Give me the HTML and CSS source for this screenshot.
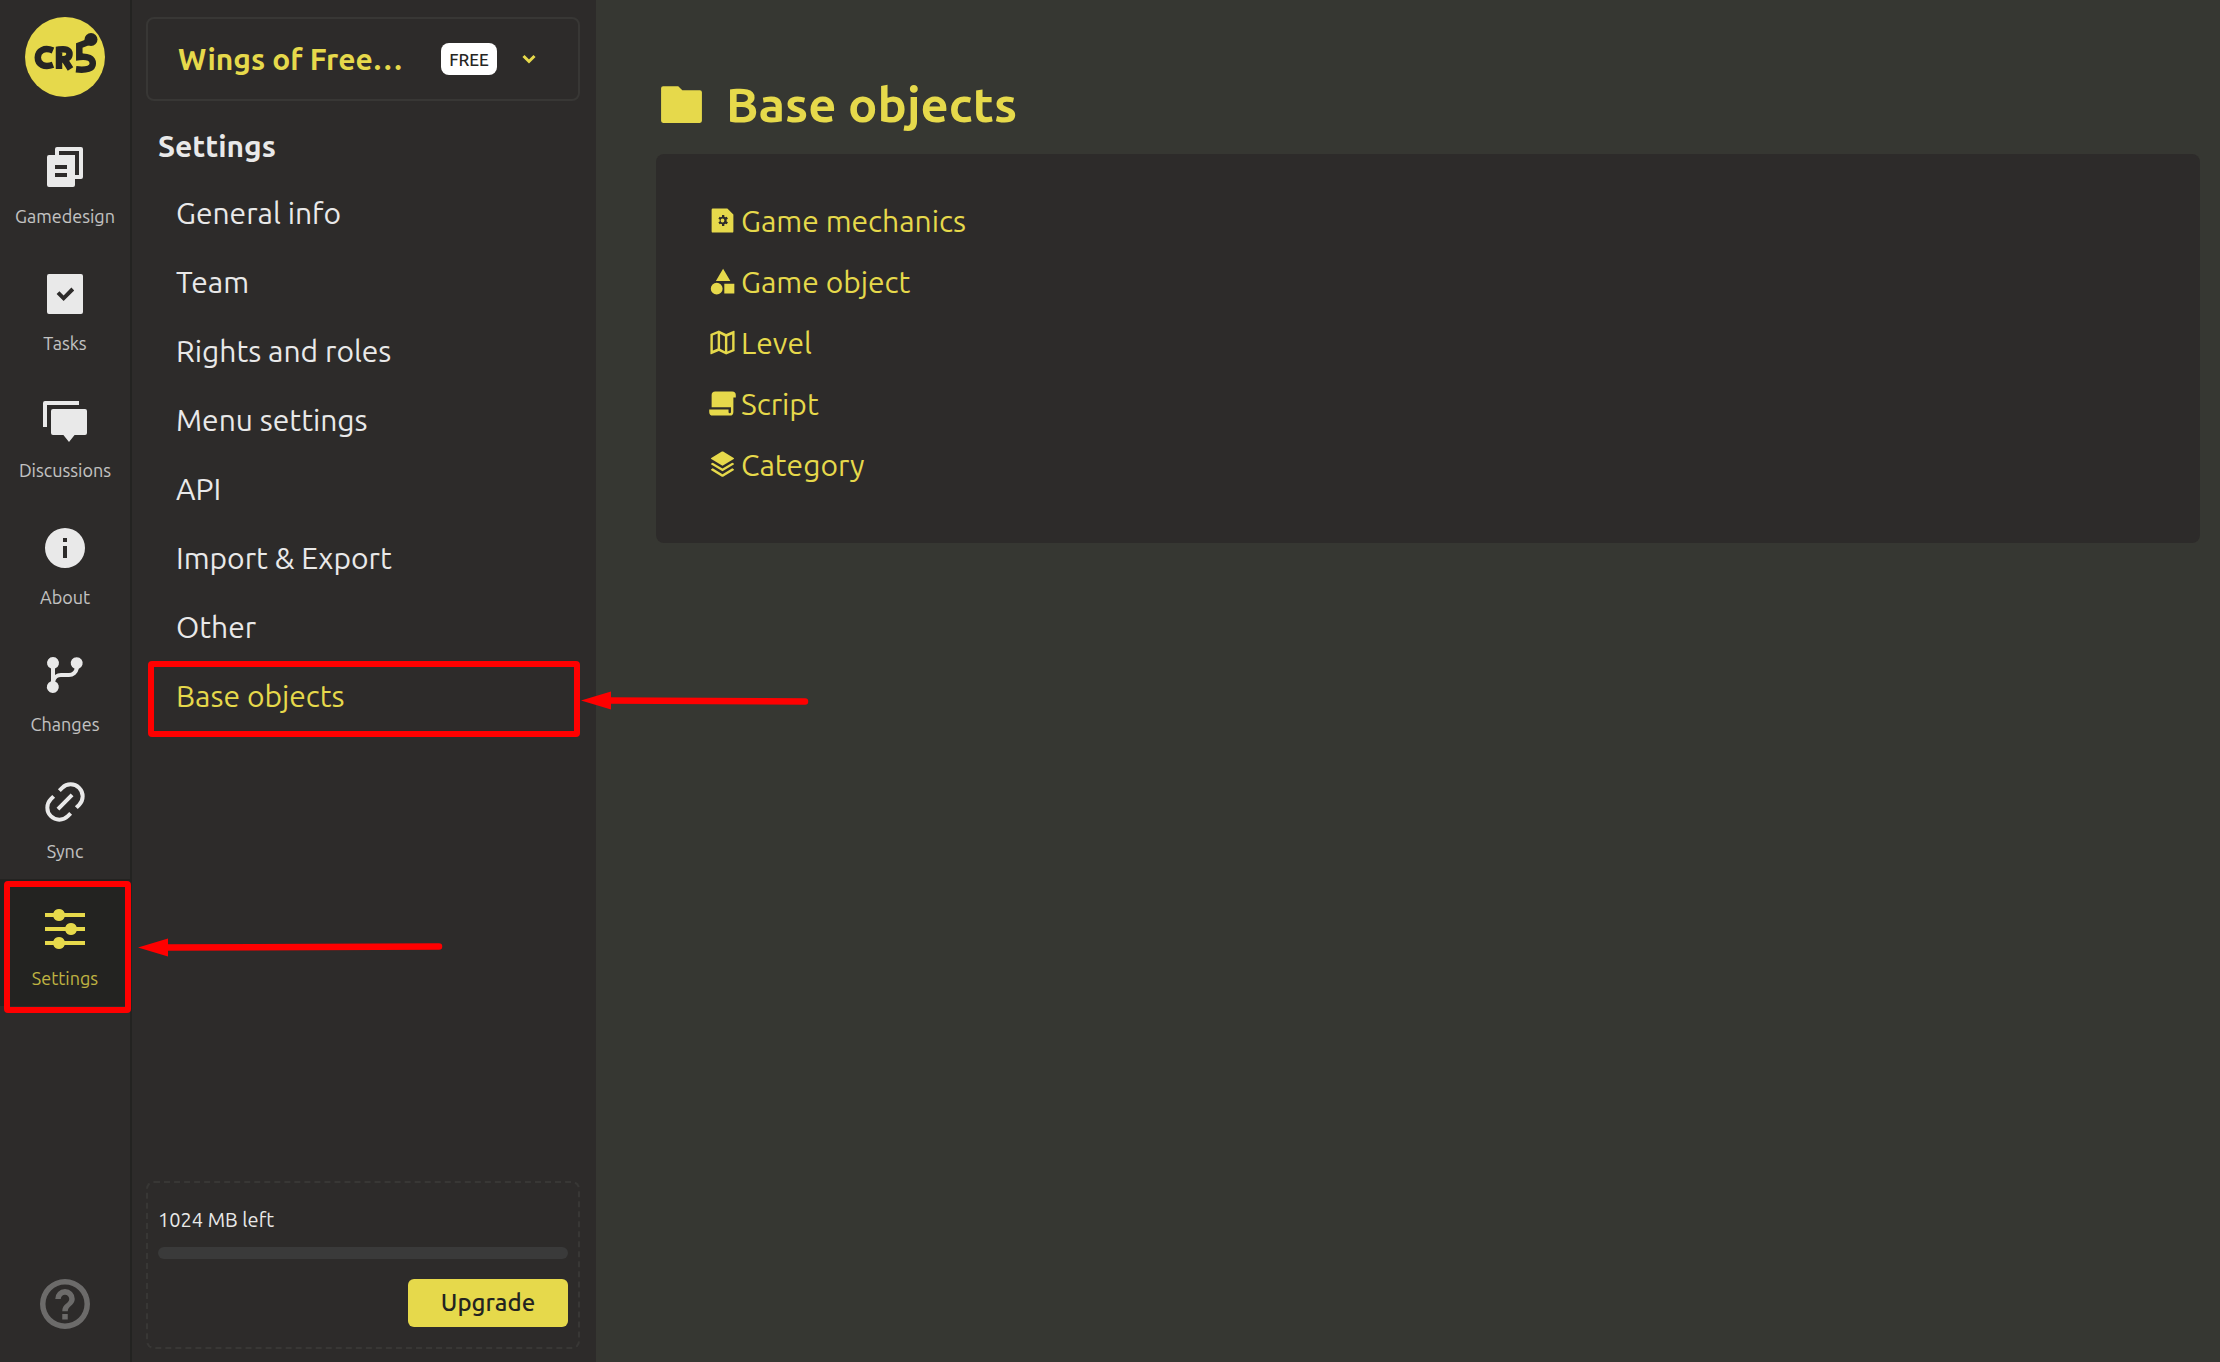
FILE: index.html
```html
<!DOCTYPE html>
<html lang="en">
<head>
<meta charset="utf-8">
<title>Base objects</title>
<link rel="stylesheet" href="styles.css">
</head>
<body>
<div class="app">
  <nav class="rail" aria-label="Sections">
    <a class="logo" href="#" aria-label="CR5 home">
      <svg viewBox="0 0 80 80"><circle cx="40" cy="40" r="40" fill="#e6d94b"/>
        <g fill="none" stroke="#252523" stroke-width="6.500">
          <path d="M28 33.500C19.500 30 12.800 33.500 12.800 40.500S19.500 51 28 47.800"/>
          <path d="M34 52V32.500c6.500-1 10.500 0 10.500 4.500s-4 5.500-9 5.500M39.500 42.500L45.500 52"/>
          <path d="M66 24L54.300 28.500V40C63 38.800 67.800 41.500 67.800 46.500S62 53.500 51 52.300"/>
        </g>
        <circle cx="66" cy="22.500" r="6.500" fill="#252523"/></svg>
    </a>
    <a class="rail-item" href="#"><svg class="rail-icon" viewBox="0 0 24 24"><path d="M7 6V3a1 1 0 0 1 1-1h12a1 1 0 0 1 1 1v14a1 1 0 0 1-1 1h-3v3a1 1 0 0 1-1 1H4a1 1 0 0 1-1-1V7a1 1 0 0 1 1-1zm2 0h8v10h2V4H9zm-2 5v2h6v-2zm0 4v2h6v-2z"/></svg><span>Gamedesign</span></a>
    <a class="rail-item" href="#"><svg class="rail-icon" viewBox="0 0 24 24"><path d="M20 22H4a1 1 0 0 1-1-1V3a1 1 0 0 1 1-1h16a1 1 0 0 1 1 1v18a1 1 0 0 1-1 1zm-8.700-6.500l5.300-5.300-1.400-1.400-3.900 3.900-2.100-2.100-1.400 1.400z"/></svg><span>Tasks</span></a>
    <a class="rail-item" href="#"><svg class="rail-icon" viewBox="0 0 24 24"><path d="M16.800 19L14 22.500 11.200 19H6a1 1 0 0 1-1-1V7a1 1 0 0 1 1-1h16a1 1 0 0 1 1 1v11a1 1 0 0 1-1 1zM2 2h17v2H3v11H1V3a1 1 0 0 1 1-1z"/></svg><span>Discussions</span></a>
    <a class="rail-item" href="#"><svg class="rail-icon" viewBox="0 0 24 24"><path d="M12 22a10 10 0 1 1 0-20 10 10 0 0 1 0 20zm-1-11v6h2v-6zm0-4v2h2V7z"/></svg><span>About</span></a>
    <a class="rail-item" href="#"><svg class="rail-icon" viewBox="0 0 24 24"><path d="M7.100 15.200a3 3 0 1 1-2.100-.1V8.800a3 3 0 1 1 2 0V12c.8-.6 1.900-1 3-1h4a3 3 0 0 0 2.800-2.100 3 3 0 1 1 2.100 0A5 5 0 0 1 14 13h-4a3 3 0 0 0-2.900 2.200z"/></svg><span>Changes</span></a>
    <a class="rail-item" href="#"><svg class="rail-icon" viewBox="0 0 24 24"><path d="M18.364 15.536L16.950 14.120l1.414-1.414a5 5 0 1 0-7.071-7.071L9.879 7.050 8.464 5.636 9.880 4.222a7 7 0 0 1 9.900 9.900zm-2.828 2.828l-1.415 1.414a7 7 0 0 1-9.900-9.900l1.415-1.414L7.050 9.880l-1.414 1.414a5 5 0 1 0 7.071 7.071l1.414-1.414zm-.708-10.607l1.415 1.415-7.071 7.070-1.415-1.414z"/></svg><span>Sync</span></a>
    <a class="rail-item is-active" href="#" aria-current="page"><svg class="rail-icon" viewBox="0 0 24 24"><path d="M6.170 18a3 3 0 0 1 5.660 0H22v2H11.830a3 3 0 0 1-5.660 0H2v-2zm6-7a3 3 0 0 1 5.660 0H22v2h-4.170a3 3 0 0 1-5.660 0H2v-2zm-6-7a3 3 0 0 1 5.660 0H22v2H11.830a3 3 0 0 1-5.660 0H2V4z"/></svg><span>Settings</span></a>
    <a class="help" href="#" aria-label="Help"><svg viewBox="0 0 24 24"><path d="M10.900 18.200h2.200v-2.200h-2.200zM12 2a10 10 0 1 0 0 20 10 10 0 0 0 0-20zm0 17.800a7.800 7.800 0 1 1 0-15.600 7.800 7.800 0 0 1 0 15.600zM12 6a3.900 3.900 0 0 0-3.900 4h2.200a1.700 1.700 0 0 1 3.400 0c0 1.800-2.800 1.900-2.800 4.900h2.200c0-2.100 2.800-2.500 2.800-4.900A3.900 3.900 0 0 0 12 6z"/></svg></a>
  </nav>

  <aside class="sidebar">
    <button class="project" type="button">
      <span class="project-name">Wings of Free…</span>
      <span class="badge">FREE</span>
      <svg class="chevron" viewBox="0 0 14 10"><path d="M1.500 2L7 7.500 12.500 2" fill="none" stroke="currentColor" stroke-width="3"/></svg>
    </button>
    <h2 class="menu-title">Settings</h2>
    <nav class="menu" aria-label="Settings">
      <a href="#">General info</a>
      <a href="#">Team</a>
      <a href="#">Rights and roles</a>
      <a href="#">Menu settings</a>
      <a href="#">API</a>
      <a href="#">Import &amp; Export</a>
      <a href="#">Other</a>
      <a class="is-active" href="#" aria-current="page">Base objects</a>
    </nav>
    <section class="storage">
      <p class="storage-text" id="storage">1024 MB left</p>
      <div class="storage-bar" role="progressbar" aria-labelledby="storage" aria-valuenow="0"></div>
      <button class="upgrade" type="button">Upgrade</button>
    </section>
  </aside>

  <main class="content">
    <h1 class="page-title"><svg viewBox="0 0 24 24"><path d="M12.400 5H21a1 1 0 0 1 1 1v14a1 1 0 0 1-1 1H3a1 1 0 0 1-1-1V4a1 1 0 0 1 1-1h7.400z"/></svg>Base objects</h1>
    <ul class="panel">
      <li><a href="#"><svg viewBox="0 0 24 24"><path fill-rule="evenodd" d="M16 2l5 5v14a1 1 0 0 1-1 1H4a1 1 0 0 1-1-1V3a1 1 0 0 1 1-1zM8.600 13.500l1 1.700 1-.6 1 .6V16.500h1.900v-1.300l1-.6 1 .6 1-1.700-1.100-.6v-1.800l1.100-.6-1-1.700-1 .6-1-.6V7.500h-1.900v1.300l-1 .6-1-.6-1 1.700 1.100.6v1.800zM12 13.600a1.600 1.600 0 1 1 0-3.200 1.600 1.600 0 0 1 0 3.200z"/></svg>Game mechanics</a></li>
      <li><a href="#"><svg viewBox="0 0 24 24"><path d="M12.500 1.500l6 10h-12zM7.200 13a4.900 4.900 0 1 1 0 9.800 4.900 4.900 0 0 1 0-9.800zM13.500 13.800h8.300v8.200h-8.300z"/></svg>Game object</a></li>
      <li><a href="#"><svg viewBox="0 0 24 24"><path d="M2 5l7-3 6 3 6.300-2.700a.5.5 0 0 1 .7.460V19l-7 3-6-3-6.300 2.700A.5.5 0 0 1 2 21.240zm14 14.400l4-1.710V5.330l-4 1.710zm-2-.2V7l-4-2v12.200zm-6-2.240V4.600L4 6.310v12.360z"/></svg>Level</a></li>
      <li><a href="#"><svg viewBox="0 0 24 24"><path d="M6 2h14a3 3 0 0 1 3 3v2h-2v12a3 3 0 0 1-3 3H4a3 3 0 0 1-3-3v-2h16v2a1 1 0 0 0 2 0v-4H3V5a3 3 0 0 1 3-3z"/></svg>Script</a></li>
      <li><a href="#"><svg viewBox="0 0 24 24"><path d="M20.083 15.200l1.202.721a.5.5 0 0 1 0 .858l-8.770 5.262a1 1 0 0 1-1.030 0l-8.770-5.262a.5.5 0 0 1 0-.858l1.202-.721L12 20.050zm0-4.700l1.202.721a.5.5 0 0 1 0 .858L12 17.650l-9.285-5.571a.5.5 0 0 1 0-.858l1.202-.721L12 15.350zm-7.569-9.191l8.771 5.262a.5.5 0 0 1 0 .858L12 13 2.715 7.429a.5.5 0 0 1 0-.858l8.770-5.262a1 1 0 0 1 1.030 0z"/></svg>Category</a></li>
    </ul>
  </main>

  <svg class="annotations" aria-hidden="true">
    <g fill="none" stroke="#ff0000" stroke-width="6">
      <rect x="7" y="884" width="121" height="126" rx="1"/>
      <rect x="151" y="664" width="426" height="70" rx="1"/>
      <path d="M165 947.500L439 946.500M608 700.500L805 701.500" stroke-width="6.500" stroke-linecap="round"/>
    </g>
    <path d="M138 947.500l30-9v18zM581 700.500l30-9v18z" fill="#ff0000"/>
  </svg>
</div>
</body>
</html>
```
FILE: styles.css
```css
* { box-sizing: border-box; }
:root {
  --yellow: #e6d94b;
  --dark: #2d2b2a;
  --line: #383735;
  --text: #e9e9e9;
}
body {
  margin: 0;
  background: #363732;
  color: var(--text);
  font-family: Ubuntu, "Noto Sans", sans-serif;
  font-size: 30px;
}
a { color: inherit; text-decoration: none; }
svg { display: block; fill: currentColor; flex: none; }
button { font: inherit; cursor: pointer; }
.app { display: flex; min-height: 100vh; position: relative; }

.rail {
  width: 132px;
  flex: none;
  display: flex;
  flex-direction: column;
  background: var(--dark);
  border-right: 2px solid #232321;
  padding-top: 17px;
}
.logo { width: 80px; margin: 0 auto 20px; }
.rail-item {
  height: 127px;
  padding-top: 26px;
  display: flex;
  flex-direction: column;
  align-items: center;
  gap: 13px;
  font-size: 18px;
  line-height: 24px;
}
.rail-item span { opacity: .8; }
.rail-item.is-active { background: #232321; color: var(--yellow); }
.rail-icon { width: 48px; height: 48px; }
.help { width: 60px; margin: auto auto 28px; color: #6c6b6a; }

.sidebar {
  width: 464px;
  flex: none;
  display: flex;
  flex-direction: column;
  background: var(--dark);
  padding: 17px 16px 13px 14px;
}
.project {
  height: 84px;
  display: flex;
  align-items: center;
  padding: 0 42px 0 30px;
  background: none;
  border: 2px solid var(--line);
  border-radius: 8px;
  color: var(--yellow);
  text-align: left;
}
.project-name {
  width: 231px;
  font-weight: 700;
  white-space: nowrap;
}
.badge {
  margin: 0 auto 0 32px;
  width: 56px;
  height: 32px;
  line-height: 34px;
  border-radius: 8px;
  background: #fff;
  color: #252523;
  font-size: 17px;
  font-weight: 500;
  text-align: center;
}
.chevron { width: 14px; height: 10px; }
.menu-title { margin: 25px 0 0 12px; font-size: 30px; line-height: 40px; }
.menu { display: flex; flex-direction: column; margin-top: 13px; }
.menu a { height: 69px; padding-left: 30px; line-height: 69px; }
.menu .is-active { color: var(--yellow); }
.storage {
  margin-top: auto;
  height: 168px;
  display: flex;
  flex-direction: column;
  padding: 23px 10px 20px;
  border: 2px dashed var(--line);
  border-radius: 8px;
}
.storage-text { margin: 0; font-size: 20px; line-height: 28px; }
.storage-bar { height: 12px; margin: 13px 0 20px; border-radius: 6px; background: #3a3a3a; }
.upgrade {
  align-self: flex-end;
  width: 160px;
  height: 48px;
  padding: 0 0 2px;
  border: 0;
  border-radius: 6px;
  background: var(--yellow);
  color: #232321;
  font-size: 24px;
  font-weight: 500;
}

.content { flex: 1; padding: 72px 20px 40px 60px; color: var(--yellow); }
.page-title {
  display: flex;
  align-items: center;
  gap: 20px;
  margin: 0;
  padding-left: 1px;
  font-size: 49px;
  line-height: 64px;
}
.page-title svg { width: 49px; height: 49px; }
.panel {
  margin: 18px 0 0;
  padding: 36px 52px 48px;
  list-style: none;
  background: var(--dark);
  border-radius: 8px;
}
.panel a { display: flex; align-items: center; gap: 4px; height: 61px; }
.panel svg { width: 29px; height: 29px; }

.annotations { position: absolute; inset: 0; width: 100%; height: 100%; pointer-events: none; }
```
